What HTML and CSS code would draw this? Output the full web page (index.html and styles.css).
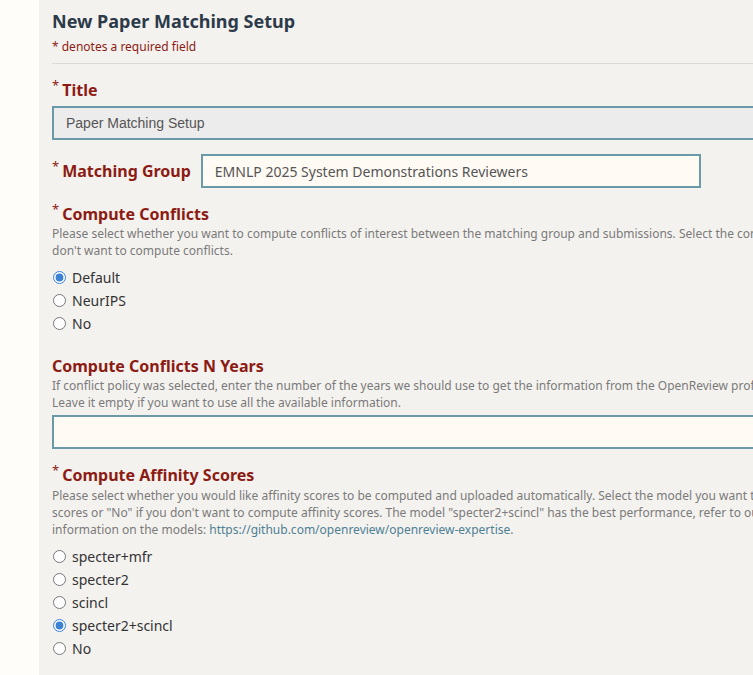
FILE: index.html
```html
<!DOCTYPE html>
<html>
<head>
<meta charset="utf-8">
<link rel="stylesheet" href="styles.css">
</head>
<body>
<div class="page">
  <div class="gutter"></div>
  <div class="panel">
    <h2 class="heading">New Paper Matching Setup</h2>
    <p class="required-note">* denotes a required field</p>
    <hr class="divider">

    <div class="field">
      <div class="label"><span class="star">*</span>Title</div>
      <input class="input input-disabled input-full" type="text" value="Paper Matching Setup" disabled>
    </div>

    <div class="field field-inline">
      <div class="label"><span class="star">*</span>Matching Group</div>
      <div class="input input-group">EMNLP 2025 System Demonstrations Reviewers</div>
    </div>

    <div class="field">
      <div class="label"><span class="star">*</span>Compute Conflicts</div>
      <p class="desc">Please select whether you want to compute conflicts of interest between the matching group and submissions. Select the conflict policy below or "No" if you don't want to compute conflicts.</p>
      <div class="radios">
        <label class="radio"><input type="radio" name="cc" checked><span>Default</span></label>
        <label class="radio"><input type="radio" name="cc"><span>NeurIPS</span></label>
        <label class="radio"><input type="radio" name="cc"><span>No</span></label>
      </div>
    </div>

    <div class="field field-gap">
      <div class="label">Compute Conflicts N Years</div>
      <p class="desc">If conflict policy was selected, enter the number of the years we should use to get the information from the OpenReview profile in order to detect conflicts. Leave it empty if you want to use all the available information.</p>
      <div class="input input-full input-empty"></div>
    </div>

    <div class="field">
      <div class="label"><span class="star">*</span>Compute Affinity Scores</div>
      <p class="desc desc-aff">Please select whether you would like affinity scores to be computed and uploaded automatically. Select the model you want to use to compute the affinity scores or "No" if you don't want to compute affinity scores. The model "specter2+scincl" has the best performance, refer to our expertise repository for more information on the models: <a class="link" href="#">https://github.com/openreview/openreview-expertise</a>.</p>
      <div class="radios">
        <label class="radio"><input type="radio" name="as"><span>specter+mfr</span></label>
        <label class="radio"><input type="radio" name="as"><span>specter2</span></label>
        <label class="radio"><input type="radio" name="as"><span>scincl</span></label>
        <label class="radio"><input type="radio" name="as" checked><span>specter2+scincl</span></label>
        <label class="radio"><input type="radio" name="as"><span>No</span></label>
      </div>
    </div>
  </div>
</div>
</body>
</html>
```

FILE: styles.css
```css
html, body {
  margin: 0;
  padding: 0;
  background: #fffdfa;
  overflow: hidden;
  height: 675px;
}
body {
  font-family: "Noto Sans", "DejaVu Sans", sans-serif;
  color: #333;
}
.page {
  display: flex;
  width: 1100px;
  min-height: 675px;
}
.gutter {
  width: 39px;
  flex: none;
  background: #fffdfa;
}
.panel {
  flex: none;
  width: 1000px;
  background: #f4f2ef;
  padding: 8px 0 20px 13px;
}
.heading {
  margin: 0;
  font-size: 18px;
  font-weight: 700;
  color: #2c3a4a;
  line-height: 26px;
}
.required-note {
  margin: 4px 0 0;
  font-size: 12px;
  line-height: 17px;
  color: #8c1b13;
}
.divider {
  border: 0;
  border-top: 1px solid #dcdad6;
  margin: 8px 0 0;
  width: 1000px;
}
.field {
  margin-top: 14px;
}
.field-inline {
  display: flex;
  align-items: center;
  gap: 10px;
}
.field-gap {
  margin-top: 19px;
}
.label {
  font-size: 16px;
  font-weight: 700;
  color: #8c1b13;
  line-height: 24px;
}
.star {
  font-size: 13px;
  font-weight: 400;
  vertical-align: top;
  line-height: 14px;
  margin-right: 3px;
}
.input {
  box-sizing: border-box;
  height: 34px;
  border: 2px solid #6a9aa8;
  background: #fffaf4;
  font-size: 14px;
  padding: 0 12px;
  display: flex;
  align-items: center;
  color: #555;
}
.input-full {
  width: 1000px;
  margin-top: 4px;
}
.input-disabled {
  font-family: "Liberation Sans", Arial, sans-serif;
  background: #edecec;
  color: #555;
  font-size: 14px;
}
.input-group {
  width: 500px;
  font-family: "Noto Sans", sans-serif;
}
.input-empty {
  margin-top: 4px;
}
.desc {
  margin: -1px 0 0;
  max-width: 890px;
  font-size: 12px;
  line-height: 17px;
  color: #7a7a7a;
}
.desc-aff {
  margin-top: 0;
}
.link {
  color: #4d8093;
  text-decoration: none;
}
.radios {
  display: flex;
  flex-direction: column;
  margin-top: 7px;
}
.radio {
  display: flex;
  align-items: center;
  height: 23px;
  font-size: 14px;
  color: #333;
}
.radio input {
  margin: 0 6px 0 1px;
  width: 13px;
  height: 13px;
  accent-color: #3b82d6;
}
```
